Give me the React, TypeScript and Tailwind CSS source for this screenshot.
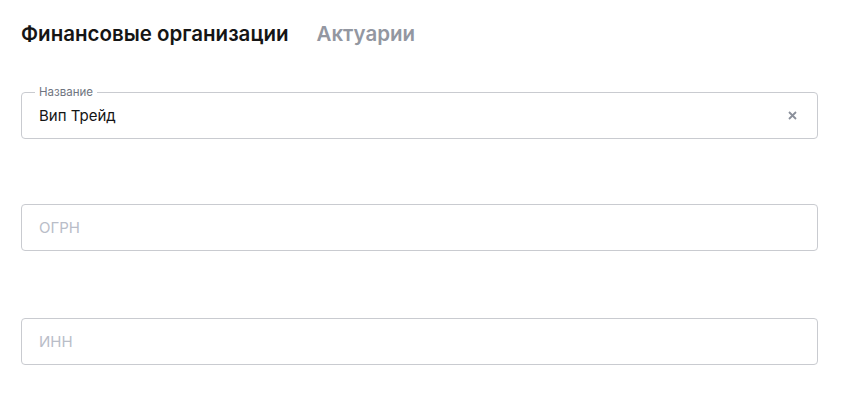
import { useState } from "react";

const font = { fontFamily: "Inter, 'Noto Sans', sans-serif" };

function Field({
  label,
  value,
  onClear,
}: {
  label: string;
  value: string;
  onClear?: () => void;
}) {
  const filled = value.length > 0;

  return (
    <div className="relative flex h-[47px] items-center rounded-[4px] border border-[#c9cbd0] pl-[17px] pr-[20px]">
      {filled && (
        <span className="absolute -top-[8px] left-[13px] bg-white px-[4px] text-[11.5px] leading-[14px] text-[#6f7480]">
          {label}
        </span>
      )}
      <span
        className={`flex-1 pt-[1px] text-[15px] ${filled ? "text-[#141414]" : "text-[#b9bdc8]"}`}
      >
        {filled ? value : label}
      </span>
      {filled && (
        <button onClick={onClear} className="flex text-[#8b909b]">
          <svg width="9" height="9" viewBox="0 0 9 9">
            <path d="M1 1L8 8M8 1L1 8" stroke="currentColor" strokeWidth="1.8" />
          </svg>
        </button>
      )}
    </div>
  );
}

export default function App() {
  const [tab, setTab] = useState("fin");
  const [name, setName] = useState("Вип Трейд");

  return (
    <div className="h-[407px] w-[844px] bg-white px-[21px] pt-[20px]" style={font}>
      <div className="flex gap-[28px] text-[20.5px] font-semibold leading-[28px]">
        <button
          onClick={() => setTab("fin")}
          className={tab === "fin" ? "text-[#151515]" : "text-[#9397a1]"}
        >
          Финансовые организации
        </button>
        <button
          onClick={() => setTab("act")}
          className={tab === "act" ? "text-[#151515]" : "text-[#9397a1]"}
        >
          Актуарии
        </button>
      </div>

      <div className="mt-[44px] flex w-[797px] flex-col">
        <Field label="Название" value={name} onClear={() => setName("")} />
        <div className="mt-[65px]">
          <Field label="ОГРН" value="" />
        </div>
        <div className="mt-[67px]">
          <Field label="ИНН" value="" />
        </div>
      </div>
    </div>
  );
}
